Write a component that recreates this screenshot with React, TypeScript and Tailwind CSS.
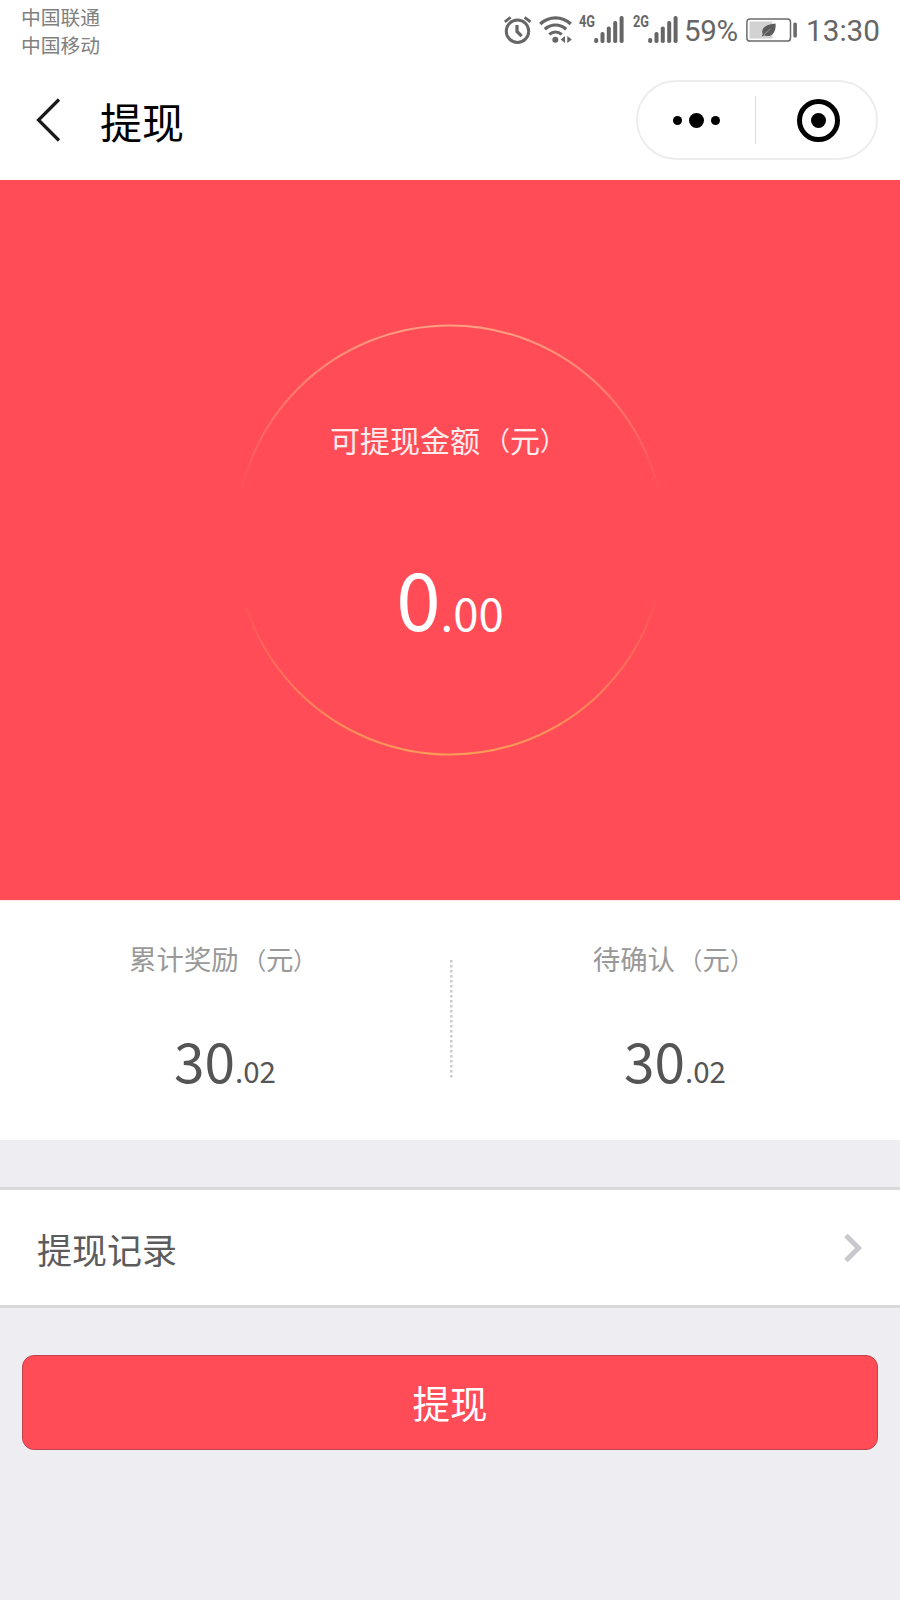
import clsx from 'clsx';

interface AmountProps {
  integer: string;
  decimal: string;
  className?: string;
  decimalClassName?: string;
}

const stats = [
  { label: '累计奖励', integer: '30', decimal: '02' },
  { label: '待确认', integer: '30', decimal: '02' },
];

const bars = [
  { x: 0, y: 22 },
  { x: 6.3, y: 16 },
  { x: 12.6, y: 10.5 },
  { x: 19, y: 5 },
  { x: 25.4, y: 0 },
];

function Signal({ label }: { label: string }) {
  return (
    <div className="relative h-7 w-[45px]">
      <span className="absolute -top-0.5 left-0 origin-left scale-x-[0.8] text-[16px] leading-[16px] font-bold">
        {label}
      </span>
      <svg className="absolute top-0 right-0" width="30" height="28" viewBox="0 0 30 28" fill="currentColor">
        {bars.map((bar) => (
          <rect key={bar.x} x={bar.x + 0.2} y={bar.y} width="4" height={27 - bar.y} rx="1.8" />
        ))}
      </svg>
    </div>
  );
}

function AlarmIcon() {
  return (
    <svg width="28" height="28" viewBox="0 0 28 28" fill="none" stroke="currentColor">
      <circle cx="13.5" cy="15.2" r="11.2" strokeWidth="3" />
      <path d="M13 9v6.5l4.6 4.6" strokeWidth="3.2" />
      <path d="M.8 5.8 6.6 1.3M26.4 5.8 20.6 1.3" strokeWidth="2.8" />
    </svg>
  );
}

function WifiIcon() {
  return (
    <svg width="34" height="28" viewBox="0 0 34 28" fill="none" stroke="currentColor">
      <path d="M1.2 8C10-.2 23-.2 31.8 8" strokeWidth="3.2" />
      <path d="M5.8 13.2c6.2-5.6 15.2-5.6 21.4 0" strokeWidth="3.2" />
      <path d="M10.3 18.4c3.7-3.2 8.7-3.2 12.4 0" strokeWidth="3.2" />
      <circle cx="16.3" cy="23.8" r="3" fill="currentColor" stroke="none" />
      <path d="M26 20v7l-4.3-3.500zM28.3 20v7l4.500-3.500z" fill="currentColor" stroke="none" />
    </svg>
  );
}

function BatteryIcon() {
  return (
    <svg width="52" height="24" viewBox="0 0 52 24" fill="none">
      <rect x="0.9" y="0.9" width="43.6" height="22.2" rx="3.2" stroke="#6b6b6b" strokeWidth="1.5" />
      <rect x="3.5" y="3.5" width="23" height="17" fill="#d2d2d2" />
      <path
        d="M29.5 5.5c.8 6.5-2 12.5-8 12.5-1.6 0-2.6-.3-3.5-.8l-1.3 1.4-.9-.9 1-1.5C14.5 11 19 6.5 29.5 5.5z"
        fill="#5c5c5c"
      />
      <path d="m18 16.6 6.5-5.6" stroke="#d2d2d2" strokeWidth=".5" />
      <rect x="47.3" y="4.5" width="3.6" height="15" rx="1.5" fill="#6b6b6b" />
    </svg>
  );
}

function StatusBar() {
  return (
    <div className="flex h-15 justify-between pr-5 pl-[21px] text-[#666]">
      <div className="pt-[3px] font-['Noto_Sans_CJK_SC',sans-serif] text-[19.8px] leading-[27.5px] text-[#808080]">
        <div>中国联通</div>
        <div>中国移动</div>
      </div>
      <div className="flex items-start pt-4 font-[Roboto,sans-serif]">
        <AlarmIcon />
        <div className="ml-[7px]">
          <WifiIcon />
        </div>
        <div className="ml-[6px]">
          <Signal label="4G" />
        </div>
        <div className="ml-[9px]">
          <Signal label="2G" />
        </div>
        <span className="ml-[6px] w-[57px] text-[29.5px] leading-[30px] tracking-[-0.4px]">59%</span>
        <div className="mt-[2px] ml-[5px] w-[52px]">
          <BatteryIcon />
        </div>
        <span className="ml-[8px] text-[29.7px] leading-[30px]">13:30</span>
      </div>
    </div>
  );
}

function NavBar() {
  return (
    <header className="flex h-[120px] items-center pr-[22px] pl-[35px]">
      <svg width="26" height="44" viewBox="0 0 26 44" fill="none" stroke="#1a1a1a" strokeWidth="3.2">
        <path d="M24 1.5 3.5 22 24 42.5" />
      </svg>
      <h1 className="mt-px ml-[39px] text-[42px] leading-none text-black">提现</h1>
      <div className="ml-auto flex h-20 w-[242px] items-center rounded-full border-2 border-[#ededed]">
        <button className="flex flex-1 items-center justify-center gap-[7px] pr-px">
          <span className="size-[9px] rounded-full bg-black" />
          <span className="size-[15px] rounded-full bg-black" />
          <span className="size-[9px] rounded-full bg-black" />
        </button>
        <span className="h-12 w-px bg-[#dcdcdc]" />
        <button className="flex flex-1 items-center justify-center pl-1">
          <span className="flex size-[43px] items-center justify-center rounded-full border-[5px] border-black">
            <span className="size-[15px] rounded-full bg-black" />
          </span>
        </button>
      </div>
    </header>
  );
}

// full-width brackets sit a little tighter around the unit
function Unit() {
  return (
    <>
      <span className="inline-block origin-right scale-x-[0.85] scale-y-[0.88]">（</span>元
      <span className="inline-block origin-left scale-x-[0.85] scale-y-[0.88]">）</span>
    </>
  );
}

function Amount({ integer, decimal, className, decimalClassName }: AmountProps) {
  return (
    <div className={clsx('flex items-baseline justify-center leading-none', className)}>
      <span>{integer}</span>
      <span className={decimalClassName}>.{decimal}</span>
    </div>
  );
}

export default function App() {
  return (
    <div className="flex h-[1600px] w-[900px] flex-col bg-[#eeedf2] font-['Noto_Sans_CJK_SC',sans-serif]">
      <div className="bg-white">
        <StatusBar />
        <NavBar />
      </div>

      <section className="relative h-[720px] bg-[#ff4c57] text-white">
        <svg className="absolute top-[144px] left-[234px]" width="432" height="432" viewBox="0 0 432 432" fill="none">
          <defs>
            <linearGradient id="ring" x1="0" y1="0" x2="0" y2="432" gradientUnits="userSpaceOnUse">
              <stop offset="0" stopColor="#ffb48c" stopOpacity="0.8" />
              <stop offset="0.4" stopColor="#ffa080" stopOpacity="0" />
              <stop offset="0.62" stopColor="#f9a060" stopOpacity="0" />
              <stop offset="1" stopColor="#faaa5a" stopOpacity="0.85" />
            </linearGradient>
          </defs>
          <circle cx="216" cy="216" r="214.5" stroke="url(#ring)" strokeWidth="2.2" />
        </svg>
        <div className="flex flex-col items-center pt-[244px]">
          <p className="text-[30px] leading-[30px] whitespace-nowrap text-white/90">
            可提现金额
            <Unit />
          </p>
          <Amount integer="0" decimal="00" className="mt-[102px] text-[80px]" decimalClassName="text-[45.5px]" />
        </div>
      </section>

      <section className="relative grid h-60 grid-cols-2 border-t border-[#ffe8ea] bg-white">
        {stats.map((stat) => (
          <div key={stat.label} className="flex flex-col items-center pt-[43px]">
            <p className="text-[27.4px] leading-[28px] whitespace-nowrap text-[#999]">
              {stat.label}
              <Unit />
            </p>
            <Amount
              integer={stat.integer}
              decimal={stat.decimal}
              className="mt-[60px] text-[55px] text-[#555]"
              decimalClassName="text-[29.5px]"
            />
          </div>
        ))}
        <svg className="absolute top-[59px] left-[450px]" width="3" height="120" viewBox="0 0 3 120">
          <path d="M1.3 0v120" stroke="#ccc" strokeWidth="2.5" strokeDasharray="2.5 2.5" />
        </svg>
      </section>

      <button className="mt-[47px] flex h-[121px] items-center justify-between border-y-3 border-[#d9d9d9] bg-white pr-[37px] pl-[37px]">
        <span className="mt-0.5 text-[35px] leading-none text-[#5c5c5c]">提现记录</span>
        <svg width="20" height="30" viewBox="0 0 20 30" fill="none" stroke="#c8c8cd" strokeWidth="5">
          <path d="m3 2.5 12.5 12.5L3 27.5" />
        </svg>
      </button>

      <button className="mx-[22px] mt-[47px] h-[95px] rounded-xl border border-[#c0444f] bg-[#ff4c57] pb-0.5 text-[37.5px] leading-none text-white">
        提现
      </button>
    </div>
  );
}
